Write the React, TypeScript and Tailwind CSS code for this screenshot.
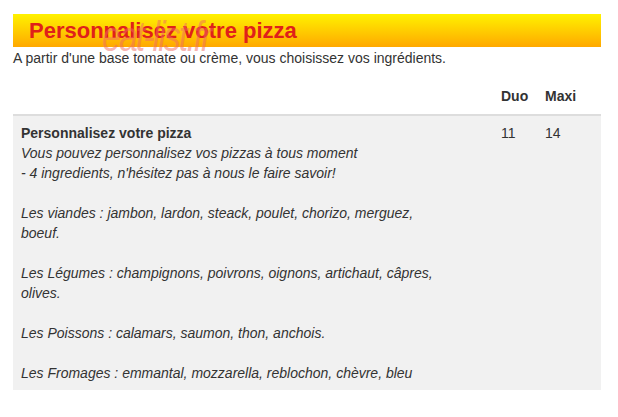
import React from "react";

const lines = [
  "Vous pouvez personnalisez vos pizzas à tous moment",
  "- 4 ingredients, n'hésitez pas à nous le faire savoir!",
  "",
  "Les viandes : jambon, lardon, steack, poulet, chorizo, merguez, boeuf.",
  "",
  "Les Légumes : champignons, poivrons, oignons, artichaut, câpres, olives.",
  "",
  "Les Poissons : calamars, saumon, thon, anchois.",
  "",
  "Les Fromages : emmantal, mozzarella, reblochon, chèvre, bleu",
];

function App() {
  return (
    <div className="w-[618px] h-[417px] bg-white font-['Liberation_Sans',Arial,sans-serif] text-[14px] text-[#333] overflow-hidden">
      <div className="mx-[13px] pt-[14px] w-[588px]">
        <div className="relative h-[33px] bg-gradient-to-b from-[#fff200] to-[#ffa800] pl-[16px] flex items-center">
          <h1 className="text-[22px] font-bold text-[#e0201a] leading-none">Personnalisez votre pizza</h1>
          <span className="absolute left-[89px] top-[1px] origin-top-left scale-y-125 italic text-[34px] leading-none text-[#f06a60]/50 tracking-[-2px]">
            eat-list.fr
          </span>
        </div>
        <p className="mt-[3px] leading-[17px]">A partir d'une base tomate ou crème, vous choisissez vos ingrédients.</p>
        <div>
          <div className="flex h-[49px] items-start border-b-2 border-[#ddd] font-bold">
            <div className="w-[480px]" />
            <div className="w-[44px] pl-[8px] pt-[19px] leading-[20px]">Duo</div>
            <div className="w-[64px] pl-[8px] pt-[19px] leading-[20px]">Maxi</div>
          </div>
          <div className="flex bg-[#f1f1f1] pt-[7px] pb-[7px] leading-[20px]">
            <div className="w-[480px] pl-[8px]">
              <div className="font-bold">Personnalisez votre pizza</div>
              <div className="italic w-[425px]">
                {lines.map((l, i) => (l ? <div key={i}>{l}</div> : <div key={i} className="h-[20px]" />))}
              </div>
            </div>
            <div className="w-[44px] pl-[8px]">11</div>
            <div className="w-[64px] pl-[8px]">14</div>
          </div>
        </div>
      </div>
    </div>
  );
}

export default App;
